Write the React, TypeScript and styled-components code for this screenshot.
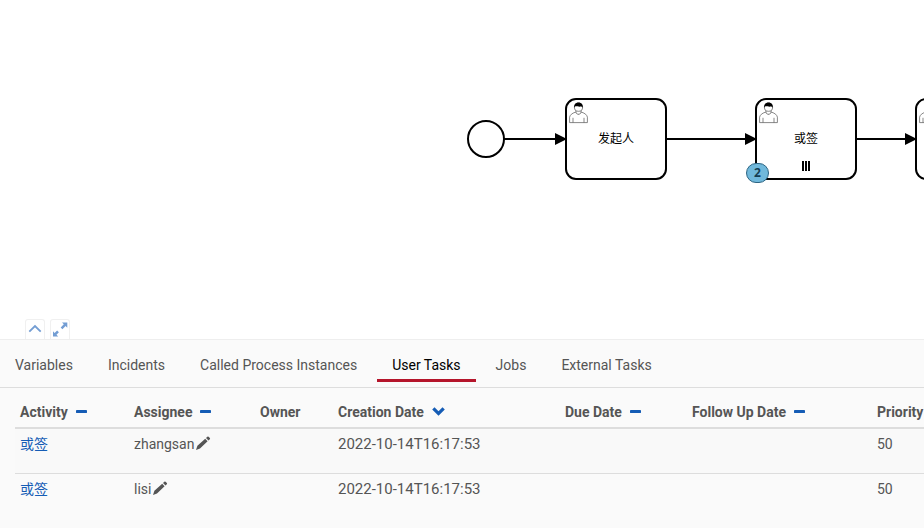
import React from "react";
import styled, { createGlobalStyle } from "styled-components";

const GlobalStyle = createGlobalStyle`
  * { box-sizing: border-box; }
  body {
    margin: 0;
    overflow: hidden;
    background: #fff;
    color: #555;
    font: 14px/20px Roboto, "Noto Sans CJK SC", sans-serif;
  }
`;

const Page = styled.main`
  display: flex;
  flex-direction: column;
  height: 100vh;
`;

const Canvas = styled.section`
  position: relative;
  flex: 1;
  min-height: 0;
  overflow: hidden;
`;

const Diagram = styled.svg`
  display: block;
  width: 100%;
  height: 100%;
`;

const TaskLabel = styled.text`
  font: 12px "Noto Sans CJK SC", sans-serif;
  text-anchor: middle;
  fill: #000;
`;

const Badge = styled.span`
  position: absolute;
  left: 746px;
  top: 163px;
  width: 23px;
  height: 20px;
  border: 1px solid #2d6583;
  border-radius: 10px;
  background: #70b8db;
  color: #143d52;
  font: bold 12px/18px "Open Sans", sans-serif;
  text-align: center;
`;

const PaneControls = styled.div`
  position: absolute;
  left: 25px;
  bottom: 0;
  display: flex;
  gap: 5px;
`;

const PaneButton = styled.button`
  display: flex;
  align-items: center;
  justify-content: center;
  width: 20px;
  height: 20px;
  padding: 0;
  border: 1px solid #f0f0f0;
  border-bottom: 0;
  border-radius: 3px 3px 0 0;
  background: #fff;
  color: #739dd3;
`;

const Panel = styled.section`
  flex: none;
  overflow: hidden;
  border-top: 1px solid #eee;
  background: #fafafa;
`;

const Tabs = styled.nav`
  display: flex;
  gap: 5px;
  padding: 10px 0 5px;
  border-bottom: 1px solid #ddd;
  white-space: nowrap;
`;

const Tab = styled.a<{ $active?: boolean }>`
  padding: 5px 15px 4px;
  border-bottom: 3px solid ${(p) => (p.$active ? "#b5152b" : "transparent")};
  color: ${(p) => (p.$active ? "#000" : "#555")};
  text-decoration: none;
`;

const TableWrap = styled.div`
  overflow: hidden;
  padding: 6px 0 10px 15px;
`;

const Table = styled.table`
  width: 100%;
  min-width: 1000px;
  table-layout: fixed;
  border-collapse: collapse;
  white-space: nowrap;
`;

const Col = styled.col<{ $width?: number }>`
  width: ${(p) => (p.$width ? `${p.$width}px` : "auto")};
`;

const HeadCell = styled.th`
  height: 34px;
  padding: 7px 5px 5px;
  border-bottom: 2px solid #ddd;
  text-align: left;
  font-weight: 700;
`;

const Row = styled.tr`
  height: 45px;
  & + & { border-top: 1px solid #ddd; }
  &:nth-child(odd) { background: #f9f9f9; }
`;

const Cell = styled.td`
  padding: 5px;
  vertical-align: top;
`;

const DateCell = styled(Cell)`
  font-size: 15px;
`;

const Inline = styled.span<{ $gap: number }>`
  display: inline-flex;
  align-items: center;
  gap: ${(p) => p.$gap}px;
`;

const IconButton = styled.button`
  display: inline-flex;
  padding: 0;
  border: 0;
  background: none;
  color: inherit;
`;

const SortButton = styled(IconButton)`
  color: #155cb5;
`;

const Link = styled.a`
  color: #155cb5;
  text-decoration: none;
`;

function UserIcon({ x, y }: { x: number; y: number }) {
  return (
    <g transform={`translate(${x} ${y})`} fill="#fff" stroke="#555" strokeWidth="0.7">
      <path d="M6.4 10.2C3 11.2 1 13 .6 15.2V20.6H18.4V15.2C18 13 16 11.2 12.6 10.2L9.5 12.3Z" />
      <path d="M4 20.5V15.8M15 20.5V15.8" fill="none" />
      <path d="M7 7.7V10.4C7.5 12.8 11.5 12.8 12 10.4V7.7" />
      <circle cx="9.5" cy="5.2" r="4.1" />
      <path d="M5.3 6C4.8 2.8 6.6.6 9.5.6S14.2 2.8 13.7 6C13.3 4.8 12.4 4.7 11.4 4.6C9 4.8 7.5 3.9 6.6 4.3C5.8 4.6 5.5 5.2 5.3 6Z" fill="#000" stroke="none" />
    </g>
  );
}

function TaskNode({ x, label, multi }: { x: number; label?: string; multi?: boolean }) {
  return (
    <g>
      <rect x={x} y="99" width="100" height="80" rx="10" fill="#fff" stroke="#000" strokeWidth="2" />
      <UserIcon x={x + 3} y={102} />
      <TaskLabel x={x + 50} y="143">{label}</TaskLabel>
      {multi && <path d="M802 161h2v10h-2zM805 161h2v10h-2zM808 161h2v10h-2z" transform={`translate(${x - 756} 0)`} />}
    </g>
  );
}

function Flow({ from, to }: { from: number; to: number }) {
  return (
    <g>
      <path d={`M${from} 139H${to - 5}`} stroke="#000" strokeWidth="2" />
      <path d={`M${to - 11} 133L${to + 1} 139L${to - 11} 145Z`} />
    </g>
  );
}

const Minus = () => (
  <svg width="11" height="12" viewBox="0 0 11 12" fill="currentColor"><rect y="4" width="11" height="3" rx="0.4" /></svg>
);

const ChevronDown = () => (
  <svg width="13" height="12" viewBox="0 0 13 12" fill="currentColor"><path d="M2.5 1.3L6.5 5.2L10.5 1.3L12.8 3.6L6.5 9.7L.2 3.6Z" /></svg>
);

const Pencil = () => (
  <svg width="15" height="16" viewBox="0 0 15 16" fill="currentColor">
    <path d="M0 14L1.4 9.8L9.2 2.8L11.6 5.2L4 12.6ZM10 2L11.3.7Q12 .2 12.6.7L13.9 2Q14.4 2.6 13.8 3.2L12.5 4.5Z" />
  </svg>
);

const ChevronUp = () => (
  <svg width="14" height="16" viewBox="0 0 14 16" fill="none" stroke="currentColor" strokeWidth="1.8"><path d="M1.3 9.7L7 4L12.7 9.7" /></svg>
);

const Expand = () => (
  <svg width="16" height="16" viewBox="0 0 16 16" fill="currentColor">
    <path d="M10 0.5H15.3V5.8L13.6 4.1L10.4 7.2L8.7 5.5L11.8 2.2ZM6.2 14.5H1V9.3L2.6 10.9L5.1 8.4L6.9 10.2L4.5 12.8Z" />
  </svg>
);

const tabs = ["Variables", "Incidents", "Called Process Instances", "User Tasks", "Jobs", "External Tasks"];

const columns: { name: string; width?: number; sort?: "none" | "down" }[] = [
  { name: "Activity", width: 114, sort: "none" },
  { name: "Assignee", width: 126, sort: "none" },
  { name: "Owner", width: 78 },
  { name: "Creation Date", width: 227, sort: "down" },
  { name: "Due Date", width: 127, sort: "none" },
  { name: "Follow Up Date", width: 185, sort: "none" },
  { name: "Priority" },
];

const tasks = [
  { activity: "或签", assignee: "zhangsan", created: "2022-10-14T16:17:53", priority: 50 },
  { activity: "或签", assignee: "lisi", created: "2022-10-14T16:17:53", priority: 50 },
];

export default function App() {
  return (
    <Page>
      <GlobalStyle />
      <Canvas>
        <Diagram>
          <circle cx="486" cy="139" r="18" fill="#fff" stroke="#000" strokeWidth="2" />
          <TaskNode x={566} label="发起人" />
          <TaskNode x={756} label="或签" multi />
          <TaskNode x={916} />
          <Flow from={504} to={566} />
          <Flow from={666} to={756} />
          <Flow from={856} to={916} />
        </Diagram>
        <Badge>2</Badge>
        <PaneControls>
          <PaneButton aria-label="Collapse"><ChevronUp /></PaneButton>
          <PaneButton aria-label="Maximize"><Expand /></PaneButton>
        </PaneControls>
      </Canvas>
      <Panel>
        <Tabs>
          {tabs.map((t) => (
            <Tab key={t} href="#" $active={t === "User Tasks"}>{t}</Tab>
          ))}
        </Tabs>
        <TableWrap>
          <Table>
            <colgroup>
              {columns.map((c) => <Col key={c.name} $width={c.width} />)}
            </colgroup>
            <thead>
              <tr>
                {columns.map((c) => (
                  <HeadCell key={c.name}>
                    <Inline $gap={8}>
                      {c.name}
                      {c.sort && (
                        <SortButton aria-label={`Sort by ${c.name}`}>
                          {c.sort === "down" ? <ChevronDown /> : <Minus />}
                        </SortButton>
                      )}
                    </Inline>
                  </HeadCell>
                ))}
              </tr>
            </thead>
            <tbody>
              {tasks.map((t) => (
                <Row key={t.assignee}>
                  <Cell><Link href="#">{t.activity}</Link></Cell>
                  <Cell>
                    <Inline $gap={2}>
                      {t.assignee}
                      <IconButton aria-label={`Edit ${t.assignee}`}><Pencil /></IconButton>
                    </Inline>
                  </Cell>
                  <Cell />
                  <DateCell>{t.created}</DateCell>
                  <Cell />
                  <Cell />
                  <Cell>{t.priority}</Cell>
                </Row>
              ))}
            </tbody>
          </Table>
        </TableWrap>
      </Panel>
    </Page>
  );
}
